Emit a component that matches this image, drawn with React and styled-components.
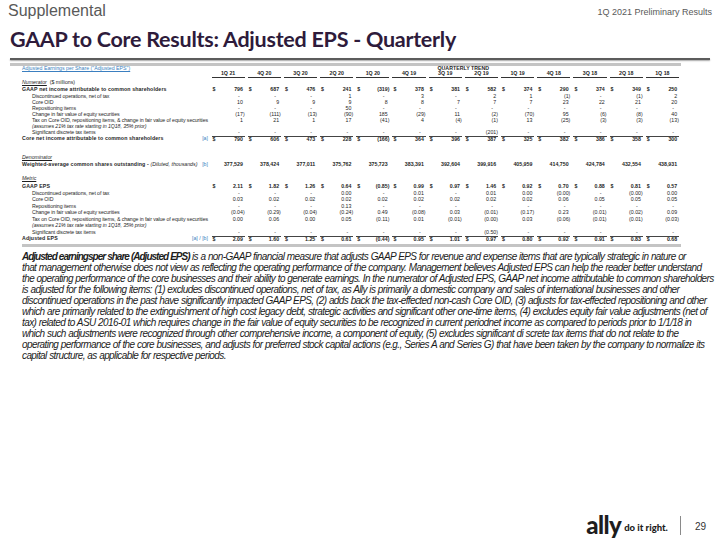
import React from 'react';
import styled, { createGlobalStyle } from 'styled-components';

const Global = createGlobalStyle`
  html, body { margin: 0; padding: 0; background: #fff; }
  body { width: 720px; height: 540px; overflow: hidden; font-family: "Liberation Sans", Arial, sans-serif; }
`;

const Page = styled.div`
  width: 720px;
  height: 540px;
  display: flex;
  flex-direction: column;
  box-sizing: border-box;
`;

const TopBar = styled.div`
  display: flex;
  justify-content: space-between;
  align-items: flex-start;
  padding: 2px 8px 0 8px;
`;

const Section = styled.div`
  font-size: 16px;
  line-height: 18px;
  color: #595959;
`;

const Deck = styled.div`
  font-size: 9px;
  line-height: 10px;
  color: #595959;
  padding-top: 5px;
`;

const Title = styled.h1`
  margin: 4px 10px 0 10px;
  font-family: Lato, "Open Sans", sans-serif;
  font-weight: 700;
  font-size: 21.5px;
  line-height: 30px;
  letter-spacing: -0.25px;
  color: #2e1b3b;
`;

const TitleRule = styled.div`
  margin: 4px 10px 0 10px;
  height: 2px;
  background: #5c5c5c;
  box-shadow: 0 1px 1.5px rgba(0, 0, 0, 0.35);
`;

const TableBox = styled.div`
  margin: 3px 0 0 10px;
  width: 671px;
  border-top: 3px solid #c4c4c4;
  padding-left: 12px;
  box-sizing: border-box;
  font-size: 5.25px;
  line-height: 1;
  color: #1f1f1f;
`;

const Row = styled.div`
  display: grid;
  grid-template-columns: 168px 20px repeat(13, 36.2px);
  height: ${p => p.$h}px;
  align-items: center;
  font-weight: ${p => (p.$bold ? 700 : 400)};
`;

const Label = styled.div`
  grid-column: 1 / 2;
  padding-left: ${p => (p.$indent ? 10 : 0)}px;
  font-style: ${p => (p.$italic ? 'italic' : 'normal')};
  letter-spacing: ${p => (p.$bold ? '0.12px' : p.$indent ? '-0.1px' : '0')};
  white-space: nowrap;
`;

const SectionLabel = styled.span`
  font-style: italic;
  text-decoration: underline;
  font-weight: 400;
`;

const Muted = styled.span`
  font-style: ${p => (p.$italic ? 'italic' : 'normal')};
  font-weight: 400;
  letter-spacing: 0;
`;

const Heading = styled.div`
  grid-column: 1 / 3;
  color: #3b7fc0;
  text-decoration: underline;
  white-space: nowrap;
`;

const Trend = styled.div`
  grid-column: 4 / 16;
  text-align: center;
  font-weight: 700;
`;

const Ref = styled.div`
  grid-column: 2 / 3;
  text-align: right;
  padding-right: 2px;
  color: #3b7fc0;
  font-weight: 400;
  white-space: nowrap;
`;

const ColHead = styled.div`
  margin: 0 1.5px;
  height: 100%;
  display: flex;
  align-items: center;
  justify-content: center;
  font-weight: 700;
  border-bottom: 0.8px solid #333;
  box-sizing: border-box;
`;

const Cell = styled.div`
  margin: 0 1.5px;
  height: 100%;
  display: flex;
  justify-content: space-between;
  align-items: center;
  padding-left: 1px;
  box-sizing: border-box;
  border-top: ${p => (p.$top ? '0.8px solid #444' : '0 none')};
`;

const Val = styled.span`
  padding-right: ${p => (p.$kind === 'neg' ? 0 : p.$kind === 'dash' ? 5 : 1.8)}px;
`;

const BottomBar = styled.div`
  margin-top: 2px;
  height: 3px;
  background: #c4c4c4;
`;

const Paragraph = styled.div`
  margin: 4px 0 0 22px;
  font-style: italic;
  font-size: 10px;
  line-height: 11px;
  letter-spacing: -0.6px;
  word-spacing: 0.3px;
  color: #1c1c1c;
`;

const Line = styled.span`
  display: block;
  white-space: nowrap;
`;

const Strong = styled.strong`
  font-weight: 700;
  letter-spacing: -1px;
`;

const Footer = styled.div`
  margin-top: auto;
  display: flex;
  justify-content: flex-end;
  align-items: center;
  padding: 0 14px 4px 0;
`;

const Brand = styled.span`
  font-family: Lato, "Open Sans", sans-serif;
  font-weight: 900;
  font-size: 24px;
  letter-spacing: -0.6px;
  color: #1d1d1d;
  line-height: 22px;
`;

const Tagline = styled.span`
  font-family: Lato, "Open Sans", sans-serif;
  font-weight: 900;
  font-size: 9.5px;
  color: #1d1d1d;
  margin-left: 3px;
  padding-top: 5px;
`;

const Divider = styled.span`
  width: 1px;
  height: 19px;
  background: #8a8a8a;
  margin: 0 14px 0 12px;
`;

const PageNo = styled.span`
  font-size: 10px;
  color: #333;
  padding-top: 3px;
`;

const COLS = ['1Q 21', '4Q 20', '3Q 20', '2Q 20', '1Q 20', '4Q 19', '3Q 19', '2Q 19', '1Q 19', '4Q 18', '3Q 18', '2Q 18', '1Q 18'];
const B = Array(13).fill('');

const NUMERATOR = [
  { label: 'GAAP net income attributable to common shareholders', bold: true, dollar: true,
    v: ['796', '687', '476', '241', '(319)', '378', '381', '582', '374', '290', '374', '349', '250'] },
  { label: 'Discontinued operations, net of tax', indent: true,
    v: ['-', '-', '-', '1', '-', '3', '-', '2', '1', '(1)', '-', '(1)', '2'] },
  { label: 'Core OID', indent: true, v: ['10', '9', '9', '9', '8', '8', '7', '7', '7', '23', '22', '21', '20'] },
  { label: 'Repositioning items', indent: true, v: ['-', '-', '-', '50', '-', '-', '-', '-', '-', '-', '-', '-', '-'] },
  { label: 'Change in fair value of equity securities', indent: true,
    v: ['(17)', '(111)', '(13)', '(90)', '185', '(29)', '11', '(2)', '(70)', '95', '(6)', '(8)', '40'] },
  { label: 'Tax on Core OID, repositioning items, & change in fair value of equity securities', indent: true,
    v: ['1', '21', '1', '17', '(41)', '4', '(4)', '(1)', '13', '(25)', '(3)', '(3)', '(13)'] },
  { label: '(assumes 21% tax rate starting in 1Q18, 35% prior)', indent: true, italic: true, v: B },
  { label: 'Significant discrete tax items', indent: true, v: ['-', '-', '-', '-', '-', '-', '-', '(201)', '-', '-', '-', '-', '-'] },
  { label: 'Core net income attributable to common shareholders', bold: true, dollar: true, total: true, ref: '[a]',
    v: ['790', '606', '473', '228', '(166)', '364', '396', '387', '325', '382', '386', '358', '300'] },
];

const SHARES = ['377,529', '378,424', '377,011', '375,762', '375,723', '383,391', '392,604', '399,916', '405,959', '414,750', '424,784', '432,554', '438,931'];

const METRIC = [
  { label: 'GAAP EPS', bold: true, dollar: true,
    v: ['2.11', '1.82', '1.26', '0.64', '(0.85)', '0.99', '0.97', '1.46', '0.92', '0.70', '0.88', '0.81', '0.57'] },
  { label: 'Discontinued operations, net of tax', indent: true,
    v: ['-', '-', '-', '0.00', '-', '0.01', '-', '0.01', '0.00', '(0.00)', '-', '(0.00)', '0.00'] },
  { label: 'Core OID', indent: true,
    v: ['0.03', '0.02', '0.02', '0.02', '0.02', '0.02', '0.02', '0.02', '0.02', '0.06', '0.05', '0.05', '0.05'] },
  { label: 'Repositioning items', indent: true, v: ['-', '-', '-', '0.13', '-', '-', '-', '-', '-', '-', '-', '-', '-'] },
  { label: 'Change in fair value of equity securities', indent: true,
    v: ['(0.04)', '(0.29)', '(0.04)', '(0.24)', '0.49', '(0.08)', '0.03', '(0.01)', '(0.17)', '0.23', '(0.01)', '(0.02)', '0.09'] },
  { label: 'Tax on Core OID, repositioning items, & change in fair value of equity securities', indent: true,
    v: ['0.00', '0.06', '0.00', '0.05', '(0.11)', '0.01', '(0.01)', '(0.00)', '0.03', '(0.06)', '(0.01)', '(0.01)', '(0.03)'] },
  { label: '(assumes 21% tax rate starting in 1Q18, 35% prior)', indent: true, italic: true, v: B },
  { label: 'Significant discrete tax items', indent: true, v: ['-', '-', '-', '-', '-', '-', '-', '(0.50)', '-', '-', '-', '-', '-'] },
  { label: 'Adjusted EPS', bold: true, dollar: true, total: true, ref: '[a] / [b]',
    v: ['2.09', '1.60', '1.25', '0.61', '(0.44)', '0.95', '1.01', '0.97', '0.80', '0.92', '0.91', '0.83', '0.68'] },
];

const kindOf = s => (s === '-' ? 'dash' : s.startsWith('(') ? 'neg' : 'pos');

function DataRow({ row, h }) {
  return (
    <Row $h={h} $bold={row.bold}>
      <Label $indent={row.indent} $italic={row.italic} $bold={row.bold}>{row.label}</Label>
      {row.ref ? <Ref>{row.ref}</Ref> : <span />}
      {row.v.map((val, i) => (
        <Cell key={i} $top={row.total}>
          <span>{row.dollar ? '$' : ''}</span>
          <Val $kind={kindOf(val)}>{val}</Val>
        </Cell>
      ))}
    </Row>
  );
}

const PARA = [
  'that management otherwise does not view as reflecting the operating performance of the company. Management believes Adjusted EPS can help the reader better understand',
  'the operating performance of the core businesses and their ability to generate earnings. In the numerator of Adjusted EPS, GAAP net income attributable to common shareholders',
  'is adjusted for the following items: (1) excludes discontinued operations, net of tax, as Ally is primarily a domestic company and sales of international businesses and other',
  'discontinued operations in the past have significantly impacted GAAP EPS, (2) adds back the tax-effected non-cash Core OID, (3) adjusts for tax-effected repositioning and other',
  'which are primarily related to the extinguishment of high cost legacy debt, strategic activities and significant other one-time items, (4) excludes equity fair value adjustments (net of',
  'tax) related to ASU 2016-01 which requires change in the fair value of equity securities to be recognized in current periodnet income as compared to periods prior to 1/1/18 in',
  'which such adjustments were recognized through other comprehensive income, a component of equity, (5) excludes significant di screte tax items that do not relate to the',
  'operating performance of the core businesses, and adjusts for preferred stock capital actions (e.g., Series A and Series G) that have been taken by the company to normalize its',
  'capital structure, as applicable for respective periods.',
];

export default function App() {
  return (
    <Page>
      <Global />
      <TopBar>
        <Section>Supplemental</Section>
        <Deck>1Q 2021 Preliminary Results</Deck>
      </TopBar>
      <Title>GAAP to Core Results: Adjusted EPS - Quarterly</Title>
      <TitleRule />
      <TableBox>
        <Row $h={5}>
          <Heading>Adjusted Earnings per Share ("Adjusted EPS")</Heading>
          <Trend>QUARTERLY TREND</Trend>
        </Row>
        <Row $h={7}>
          <span />
          <span />
          {COLS.map(c => <ColHead key={c}>{c}</ColHead>)}
        </Row>
        <Row $h={9}>
          <Label><SectionLabel>Numerator</SectionLabel>&nbsp; ($ millions)</Label>
        </Row>
        {NUMERATOR.map((r, i) => <DataRow key={i} row={r} h={6.1} />)}
        <Row $h={13} />
        <Row $h={6}>
          <Label><SectionLabel>Denominator</SectionLabel></Label>
        </Row>
        <Row $h={8} $bold>
          <Label $bold>Weighted-average common shares outstanding - <Muted $italic>(Diluted, thousands)</Muted></Label>
          <Ref>[b]</Ref>
          {SHARES.map((s, i) => (
            <Cell key={i}>
              <span />
              <Val $kind="pos">{s}</Val>
            </Cell>
          ))}
        </Row>
        <Row $h={7} />
        <Row $h={6}>
          <Label><SectionLabel>Metric</SectionLabel></Label>
        </Row>
        <Row $h={2} />
        {METRIC.map((r, i) => <DataRow key={i} row={r} h={6.5} />)}
        <BottomBar />
      </TableBox>
      <Paragraph>
        <Line>
          <Strong>Adjusted earningsper share (Adjusted EPS)</Strong> is a non-GAAP financial measure that adjusts GAAP EPS for revenue and expense items that are typically strategic in nature or
        </Line>
        {PARA.map((t, i) => <Line key={i}>{t}</Line>)}
      </Paragraph>
      <Footer>
        <Brand>ally</Brand>
        <Tagline>do it right.</Tagline>
        <Divider />
        <PageNo>29</PageNo>
      </Footer>
    </Page>
  );
}
